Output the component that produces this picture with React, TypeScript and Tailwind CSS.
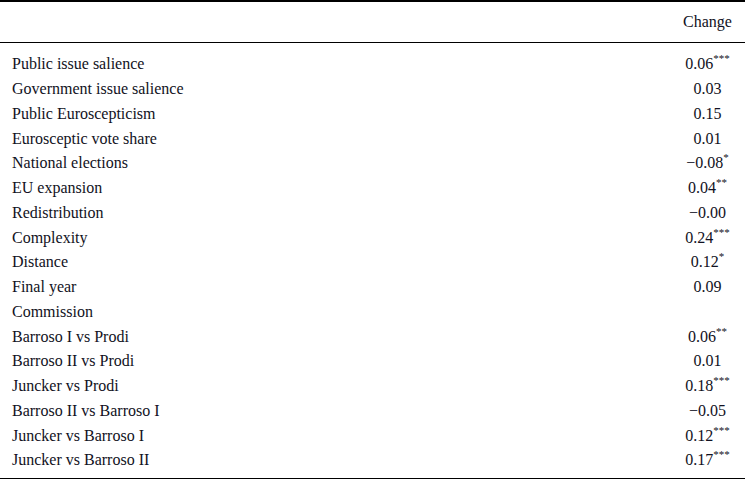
import React from "react";

type Row = { label: string; v?: string; stars?: string };

const rows: Row[] = [
  { label: "Public issue salience", v: "0.06", stars: "***" },
  { label: "Government issue salience", v: "0.03" },
  { label: "Public Euroscepticism", v: "0.15" },
  { label: "Eurosceptic vote share", v: "0.01" },
  { label: "National elections", v: "−0.08", stars: "*" },
  { label: "EU expansion", v: "0.04", stars: "**" },
  { label: "Redistribution", v: "−0.00" },
  { label: "Complexity", v: "0.24", stars: "***" },
  { label: "Distance", v: "0.12", stars: "*" },
  { label: "Final year", v: "0.09" },
  { label: "Commission" },
  { label: "Barroso I vs Prodi", v: "0.06", stars: "**" },
  { label: "Barroso II vs Prodi", v: "0.01" },
  { label: "Juncker vs Prodi", v: "0.18", stars: "***" },
  { label: "Barroso II vs Barroso I", v: "−0.05" },
  { label: "Juncker vs Barroso I", v: "0.12", stars: "***" },
  { label: "Juncker vs Barroso II", v: "0.17", stars: "***" },
];

export default function App() {
  return (
    <div
      className="w-[745px] h-[479px] bg-white text-[#111122] text-[16px]"
      style={{ fontFamily: '"Liberation Serif", "Times New Roman", serif' }}
    >
      <div className="border-t-2 border-black" />
      <div className="flex items-center h-[41px] border-b border-black">
        <div className="flex-1" />
        <div className="w-[75px] text-center leading-none">Change</div>
      </div>
      <div className="pt-[9px] pb-[5px] border-b-2 border-black">
        {rows.map((r, i) => (
          <div key={i} className="flex items-center h-[24.75px] leading-none">
            <div className="flex-1 pl-[12px]">{r.label}</div>
            <div className="w-[75px] text-center whitespace-nowrap">
              {r.v}
              {r.stars && (
                <span className="relative top-[-7px] text-[11px] leading-none">{r.stars}</span>
              )}
            </div>
          </div>
        ))}
      </div>
    </div>
  );
}
